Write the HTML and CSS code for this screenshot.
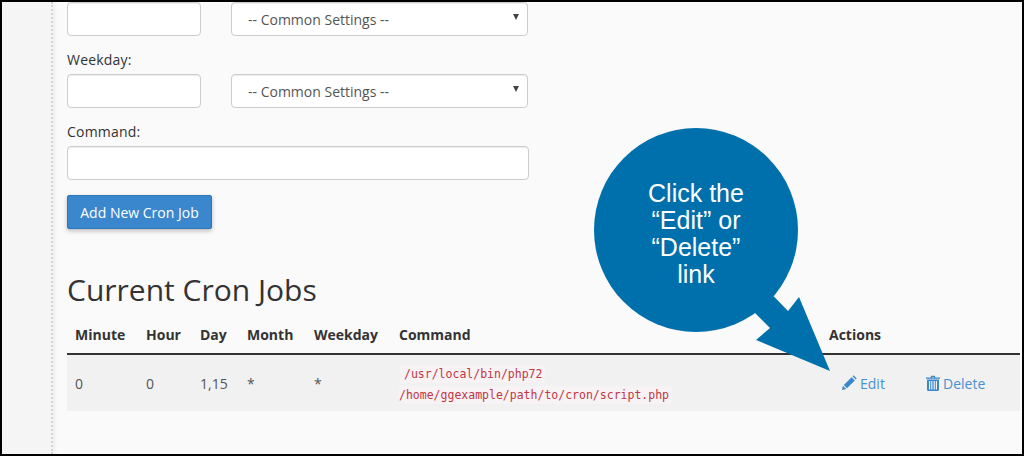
FILE: index.html
```html
<!DOCTYPE html>
<html lang="en">
<head>
    <meta charset="UTF-8">
    <title>Cron Jobs</title>
    <link rel="stylesheet" href="styles.css">
</head>
<body>
    <div class="frame">
        <div class="sidebar"></div>
        <div class="main">
            <div class="field-row">
                <input class="short-input" type="text">
                <div class="select-wrap">
                    <select class="common-select"><option>-- Common Settings --</option></select>
                </div>
            </div>
            <label class="field-label">Weekday:</label>
            <div class="field-row">
                <input class="short-input" type="text">
                <div class="select-wrap">
                    <select class="common-select"><option>-- Common Settings --</option></select>
                </div>
            </div>
            <label class="field-label">Command:</label>
            <input class="long-input" type="text">
            <button class="add-btn" type="button">Add New Cron Job</button>

            <h2 class="jobs-title">Current Cron Jobs</h2>
            <table class="jobs">
                <colgroup>
                    <col class="c-minute"><col class="c-hour"><col class="c-day"><col class="c-month">
                    <col class="c-weekday"><col class="c-command"><col>
                </colgroup>
                <thead>
                    <tr>
                        <th>Minute</th>
                        <th>Hour</th>
                        <th>Day</th>
                        <th>Month</th>
                        <th>Weekday</th>
                        <th>Command</th>
                        <th>Actions</th>
                    </tr>
                </thead>
                <tbody>
                    <tr>
                        <td>0</td>
                        <td>0</td>
                        <td>1,15</td>
                        <td>*</td>
                        <td>*</td>
                        <td class="command"><code class="first">/usr/local/bin/php72</code><br><code>/home/ggexample/path/to/cron/script.php</code></td>
                        <td>
                            <div class="actions">
                                <a class="action edit" href="#">
                                    <svg viewBox="0 0 16 16" width="16" height="16"><path d="M1 15l.9-4.2 3.3 3.3zM2.8 10L10.6 2.2l3.2 3.2L6 13.200zM11.500 1.300l1-1 3.200 3.200-1 1z"/></svg>
                                    Edit
                                </a>
                                <a class="action" href="#">
                                    <svg viewBox="0 0 14 16" width="14" height="16"><path fill-rule="evenodd" d="M4.500 2.500L5.300.8h3.400l.8 1.700H14v1.300H0V2.500zM5.900 2.500h2.200l-.3-.6H6.200zM1 4.500h12v10.300c0 .7-.5 1.200-1.100 1.200H2.100C1.500 16 1 15.500 1 14.800zM3 6v8.500h1.200V6zM5.200 6v8.500h1.200V6zM7.600 6v8.500h1.200V6zM9.800 6v8.500H11V6z"/></svg>
                                    Delete
                                </a>
                            </div>
                        </td>
                    </tr>
                </tbody>
            </table>
        </div>

        <svg class="callout-shape" viewBox="0 0 240 245" width="240" height="245">
            <circle cx="102" cy="102" r="102"/>
            <polygon points="156,144 194,183 205,169 236,243 162,212 176,200 141,165"/>
        </svg>
        <div class="callout-text">Click the<br>“Edit” or<br>“Delete”<br>link</div>
    </div>
</body>
</html>
```

FILE: styles.css
```css
*{
    margin: 0;
    padding: 0;
    box-sizing: border-box;
}

body{
    width: 1024px;
    height: 456px;
    overflow: hidden;
    font-family: "Open Sans", sans-serif;
    font-size: 14px;
    color: #333;
}

.frame{
    position: relative;
    display: flex;
    height: 456px;
    border: 2px solid #000;
    overflow: hidden;
    background-color: #fafafa;
}

.sidebar{
    flex: 0 0 51px;
    background-color: #f5f5f6;
    border-right: 2px dotted #d4d4d4;
    box-shadow: 2px 0 4px rgba(0,0,0,0.05);
}

.main{
    flex: 1;
    min-width: 0;
    padding-left: 14px;
}

.field-row{
    display: flex;
    gap: 30px;
}

input, select{
    height: 34px;
    background-color: #fff;
    border: 1px solid #ccc;
    border-radius: 4px;
    box-shadow: inset 0 1px 1px rgba(0,0,0,0.075);
}

.short-input{
    width: 134px;
}

.select-wrap{
    position: relative;
    width: 297px;
}

.select-wrap::after{
    content: '';
    position: absolute;
    top: 12px;
    right: 9px;
    border-left: 3px solid transparent;
    border-right: 3px solid transparent;
    border-top: 6px solid #444;
}

.common-select{
    width: 100%;
    padding-left: 16px;
    appearance: none;
    font-family: "Open Sans", sans-serif;
    font-size: 14px;
    color: #555;
}

.field-label{
    display: block;
    height: 38px;
    padding-top: 14px;
    line-height: 19px;
    letter-spacing: 0.2px;
    font-weight: 400;
}

.long-input{
    display: block;
    width: 462px;
}

.add-btn{
    display: block;
    width: 145px;
    height: 34px;
    margin-top: 15px;
    background-color: #3a87cd;
    border: 1px solid #2f76b8;
    border-radius: 2px;
    box-shadow: 0 2px 4px rgba(0,0,0,0.25);
    color: #fff;
    font-family: "Open Sans", sans-serif;
    font-size: 14px;
}

.jobs-title{
    margin-top: 41px;
    font-size: 30px;
    line-height: 40px;
    font-weight: 400;
}

.jobs{
    width: 953px;
    margin-top: 5px;
    border-collapse: collapse;
    table-layout: fixed;
}

.c-minute{ width: 71px; }
.c-hour{ width: 54px; }
.c-day{ width: 47px; }
.c-month{ width: 67px; }
.c-weekday{ width: 85px; }
.c-command{ width: 430px; }

.jobs th{
    height: 39px;
    padding: 0 8px;
    text-align: left;
    border-bottom: 2px solid #333;
    font-weight: 700;
}

.jobs td{
    height: 57px;
    padding: 0 8px;
    background-color: #f1f1f1;
    color: #555;
}

.jobs td.command{
    line-height: 21px;
}

code{
    padding: 2px 3px 2px 0;
    background-color: #f7f2f3;
    border-radius: 3px;
    color: #bf3645;
    font-family: "DejaVu Sans Mono", monospace;
    font-size: 11.500px;
    line-height: 1;
}

code.first{
    padding-left: 4px;
    margin-left: 1px;
}

.actions{
    display: flex;
    gap: 40px;
    padding-left: 12px;
}

.action{
    display: flex;
    align-items: center;
    gap: 3px;
    width: 45px;
    color: #4a90d0;
    text-decoration: none;
    white-space: nowrap;
}

.action svg{
    flex: none;
    fill: #3a87cd;
}

/* annotation over the page */
.callout-shape{
    position: absolute;
    left: 592px;
    top: 126px;
    fill: #0070ad;
}

.callout-text{
    position: absolute;
    left: 592px;
    top: 178px;
    width: 204px;
    text-align: center;
    color: #fff;
    font-family: "Liberation Sans", Arial, sans-serif;
    font-size: 25px;
    line-height: 27px;
}
```
